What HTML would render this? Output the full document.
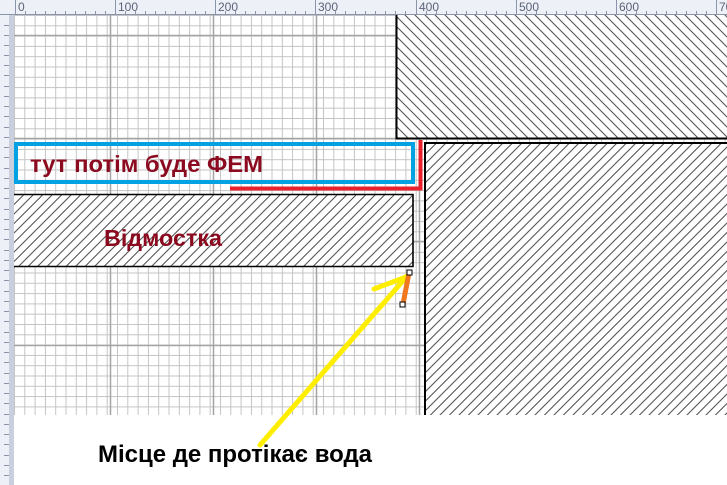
<!DOCTYPE html>
<html><head><meta charset="utf-8"><style>
html,body{margin:0;padding:0;width:727px;height:485px;overflow:hidden;background:#fff}
svg{display:block}
text{font-family:"Liberation Sans","DejaVu Sans",sans-serif;font-weight:bold}
</style></head><body>
<svg width="727" height="485" xmlns="http://www.w3.org/2000/svg">
<defs>
<pattern id="minor" x="14" y="15" width="10.3" height="10.3" patternUnits="userSpaceOnUse">
<path d="M0 0.5H10.3M0.5 0V10.3" stroke="#c4c4c4" stroke-width="1" fill="none"/>
</pattern>
<pattern id="hb" width="10" height="10" patternUnits="userSpaceOnUse">
<path d="M0 0L10 10M-5 5L5 15M5 -5L15 5" stroke="#555" stroke-width="1.1"/>
</pattern>
<pattern id="hf" width="9.5" height="9.5" patternUnits="userSpaceOnUse">
<path d="M0 9.5L9.5 0M-4.75 4.75L4.75 -4.75M4.75 14.25L14.25 4.75" stroke="#555" stroke-width="1.1"/>
</pattern>
</defs>
<rect x="0" y="0" width="727" height="15" fill="#eef0f7"/>
<rect x="0" y="0" width="14" height="485" fill="#eef0f7"/>
<rect x="9" y="15" width="5" height="470" fill="#c9cfdd"/>
<line x1="0" y1="14.5" x2="727" y2="14.5" stroke="#8a94aa"/>
<g stroke="#8a94aa" stroke-width="1">
<path d="M15.5 0V15M115.5 0V15M215.5 0V15M315.5 0V15M416.5 0V15M516.5 0V15M616.5 0V15M716.5 0V15"/>
<path d="M25.5 11V15M35.5 11V15M45.5 11V15M55.5 11V15M65.5 11V15M75.5 11V15M85.5 11V15M95.5 11V15M105.5 11V15M125.5 11V15M135.5 11V15M145.5 11V15M155.5 11V15M165.5 11V15M175.5 11V15M185.5 11V15M195.5 11V15M205.5 11V15M225.5 11V15M235.5 11V15M245.5 11V15M255.5 11V15M265.5 11V15M275.5 11V15M285.5 11V15M295.5 11V15M305.5 11V15M325.5 11V15M335.5 11V15M345.5 11V15M355.5 11V15M365.5 11V15M375.5 11V15M385.5 11V15M395.5 11V15M405.5 11V15M426.5 11V15M436.5 11V15M446.5 11V15M456.5 11V15M466.5 11V15M476.5 11V15M486.5 11V15M496.5 11V15M506.5 11V15M526.5 11V15M536.5 11V15M546.5 11V15M556.5 11V15M566.5 11V15M576.5 11V15M586.5 11V15M596.5 11V15M606.5 11V15M626.5 11V15M636.5 11V15M646.5 11V15M656.5 11V15M666.5 11V15M676.5 11V15M686.5 11V15M696.5 11V15M706.5 11V15"/>
</g>
<g font-size="12" fill="#5a6478">
<text x="18" y="11" style="font-weight:normal">0</text>
<text x="118" y="11" style="font-weight:normal">100</text>
<text x="218" y="11" style="font-weight:normal">200</text>
<text x="318" y="11" style="font-weight:normal">300</text>
<text x="419" y="11" style="font-weight:normal">400</text>
<text x="519" y="11" style="font-weight:normal">500</text>
<text x="619" y="11" style="font-weight:normal">600</text>
<text x="719" y="11" style="font-weight:normal">700</text>
</g>
<g stroke="#8a94aa"><path d="M4 25.5H9M4 35.5H9M4 45.5H9M4 55.5H9M4 65.5H9M4 75.5H9M4 86.5H9M4 96.5H9M4 106.5H9M4 116.5H9M4 127.5H9M4 137.5H9M4 147.5H9M4 157.5H9M4 168.5H9M4 178.5H9M4 188.5H9M4 198.5H9M4 209.5H9M4 219.5H9M4 229.5H9M4 239.5H9M4 250.5H9M4 260.5H9M4 270.5H9M4 280.5H9M4 291.5H9M4 301.5H9M4 311.5H9M4 321.5H9M4 332.5H9M4 342.5H9M4 352.5H9M4 362.5H9M4 373.5H9M4 383.5H9M4 393.5H9M4 403.5H9M4 414.5H9M4 424.5H9M4 434.5H9M4 444.5H9M4 455.5H9M4 465.5H9M4 475.5H9"/></g>
<rect x="14" y="15" width="713" height="400" fill="#fff"/>
<rect x="14" y="15" width="713" height="400" fill="url(#minor)"/>
<g stroke="#a4a4a4" stroke-width="1.5">
<path d="M110.5 15V415M213.5 15V415M316.5 15V415M419.5 15V415M14 35.5H727M14 138.5H727M14 241.5H727M14 345.5H727"/>
</g>
<rect x="14" y="415" width="713" height="70" fill="#fff"/>
<rect x="396" y="15" width="340" height="124" fill="#fff"/>
<rect x="396" y="15" width="340" height="124" fill="url(#hb)"/>
<path d="M396.5 15V138.5H727" stroke="#000" stroke-width="2" fill="none"/>
<rect x="424" y="142" width="310" height="273" fill="#fff"/>
<rect x="424" y="142" width="310" height="273" fill="url(#hf)"/>
<path d="M425 415V143H727" stroke="#000" stroke-width="2" fill="none"/>
<rect x="14" y="194" width="399" height="73" fill="#fff"/>
<rect x="14" y="194" width="399" height="73" fill="url(#hf)"/>
<path d="M14 194.5H413V266.5H14" stroke="#000" stroke-width="1.6" fill="none"/>
<rect x="16" y="144" width="397" height="38" fill="none" stroke="#00a2e3" stroke-width="4"/>
<path d="M420.5 140V188.5H230" stroke="#e8212d" stroke-width="4" fill="none"/>
<text x="30" y="172" font-size="23" fill="#8b0a1f" textLength="233" lengthAdjust="spacingAndGlyphs">тут потім буде ФЕМ</text>
<text x="104" y="246" font-size="23" fill="#8b0a1f" textLength="118" lengthAdjust="spacingAndGlyphs">Відмостка</text>
<path d="M260 445L408 275M374 289L406 277" stroke="#ffee00" stroke-width="5" stroke-linecap="round" fill="none"/>
<line x1="409" y1="273" x2="403" y2="304" stroke="#f07820" stroke-width="5"/>
<rect x="407" y="270" width="5" height="5" fill="#fff" stroke="#000"/>
<rect x="400" y="302" width="5" height="5" fill="#fff" stroke="#000"/>
<text x="98" y="462" font-size="24" fill="#000" textLength="274" lengthAdjust="spacingAndGlyphs">Місце де протікає вода</text>
</svg>
</body></html>
